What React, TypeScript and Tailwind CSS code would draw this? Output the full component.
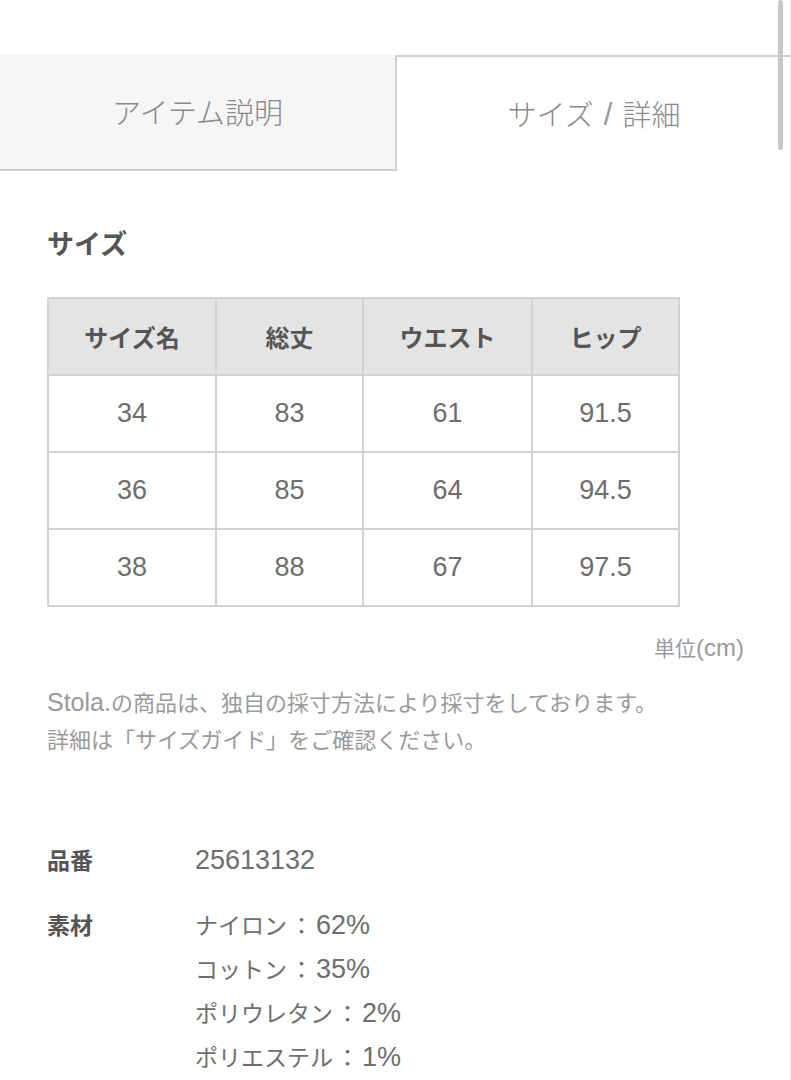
import React from "react";

const rows = [
  ["34", "83", "61", "91.5"],
  ["36", "85", "64", "94.5"],
  ["38", "88", "67", "97.5"],
];
const heads = ["サイズ名", "総丈", "ウエスト", "ヒップ"];
const widths = ["w-[168px]", "w-[147px]", "w-[169px]", "w-[147px]"];

const latin = { fontFamily: '"Liberation Sans", Arial, sans-serif' };

function L({ children, className }: { children: React.ReactNode; className: string }) {
  return (
    <span className={`leading-none ${className}`} style={latin}>
      {children}
    </span>
  );
}

const materials: [string, string][] = [
  ["ナイロン", "62%"],
  ["コットン", "35%"],
  ["ポリウレタン", "2%"],
  ["ポリエステル", "1%"],
];

export default function App() {
  return (
    <div
      className="relative w-[791px] h-[1080px] overflow-hidden bg-white"
      style={{ fontFamily: '"Noto Sans CJK JP", "Noto Sans", sans-serif' }}
    >
      <div className="pt-[55px]">
        <div className="flex h-[116px]">
          <div className="w-[395px] bg-[#f6f6f6] border-b-2 border-[#cfcfcf] flex items-center justify-center text-[29px] text-[#8a8a8a] font-light">
            アイテム説明
          </div>
          <div className="flex-1 border-t-2 border-l-2 border-[#cfcfcf] flex items-center justify-center text-[29px] text-[#8a8a8a] font-light">
            サイズ
            <L className="text-[31px] px-[10px] text-[#9a9a9a]">/</L>
            詳細
          </div>
        </div>
        <div className="px-[47px]">
          <div className="mt-[52px] h-[40px] flex items-center text-[27px] font-bold text-[#555]">
            サイズ
          </div>
          <table className="mt-[34px] border-collapse border-2 border-[#d2d2d2]">
            <thead>
              <tr className="h-[77px] bg-[#e4e4e4]">
                {heads.map((h, i) => (
                  <th
                    key={h}
                    className={`${widths[i]} border-2 border-[#d2d2d2] p-0 text-center text-[24px] font-bold text-[#555]`}
                  >
                    {h}
                  </th>
                ))}
              </tr>
            </thead>
            <tbody>
              {rows.map((r, ri) => (
                <tr key={ri} className="h-[77px]">
                  {r.map((c, i) => (
                    <td
                      key={i}
                      className="border-2 border-[#d2d2d2] p-0 text-center text-[27px] text-[#6e6e6e]"
                      style={latin}
                    >
                      {c}
                    </td>
                  ))}
                </tr>
              ))}
            </tbody>
          </table>
          <div className="mt-[24px] text-right text-[21px] text-[#9a9a9a] leading-[32px]">
            単位<L className="text-[24px]">(cm)</L>
          </div>
          <div className="mt-[20px] text-[22px] text-[#9a9a9a] leading-[37px]">
            <div>
              <L className="text-[25px]">Stola.</L>の商品は、独自の採寸方法により採寸をしております。
            </div>
            <div>詳細は「サイズガイド」をご確認ください。</div>
          </div>
          <div className="mt-[82px] flex text-[23px] leading-[40px]">
            <div className="w-[148px] font-bold text-[#555]">品番</div>
            <div className="text-[#6e6e6e]">
              <L className="text-[27px]">25613132</L>
            </div>
          </div>
          <div className="mt-[23px] flex text-[23px] leading-[44px]">
            <div className="w-[148px] font-bold text-[#555]">素材</div>
            <div className="text-[#6e6e6e]">
              {materials.map(([n, v]) => (
                <div key={n}>
                  {n}
                  <span className="px-[3px]">：</span>
                  <L className="text-[27px]">{v}</L>
                </div>
              ))}
            </div>
          </div>
        </div>
      </div>
      <div className="absolute right-[8px] top-0 w-[5px] h-[150px] rounded-full bg-[#c8c8c8]" />
      <div className="absolute right-0 top-0 w-px h-full bg-[#e6e6e6]" />
    </div>
  );
}
